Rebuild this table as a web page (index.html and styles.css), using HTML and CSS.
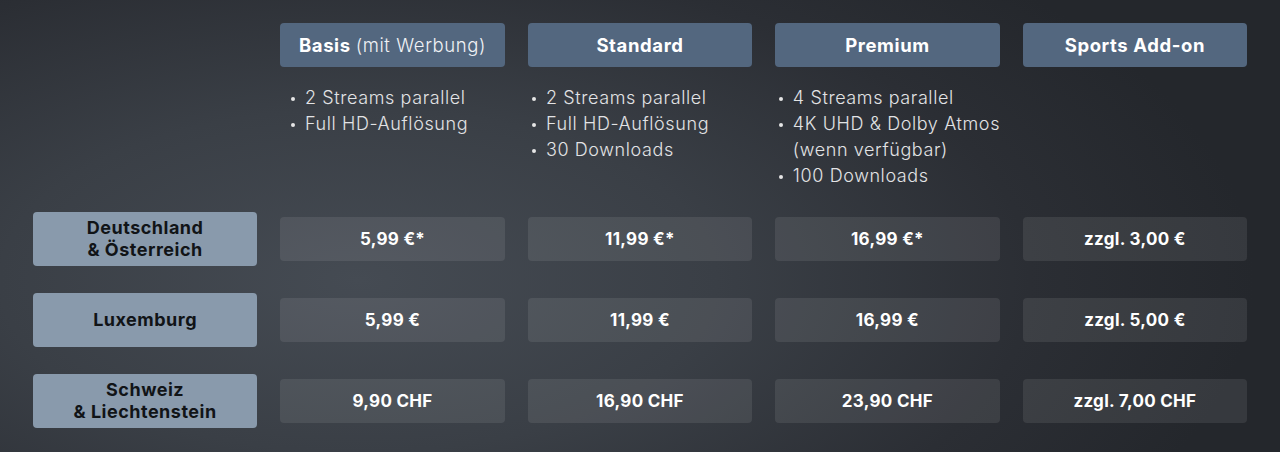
FILE: index.html
```html
<!DOCTYPE html>
<html lang="de">
<head>
<meta charset="utf-8">
<title>Preise</title>
<link rel="stylesheet" href="styles.css">
</head>
<body>
<main class="table">
  <div class="row row-head">
    <div class="corner"></div>
    <div class="plan"><strong>Basis</strong> <span class="light">(mit Werbung)</span></div>
    <div class="plan"><strong>Standard</strong></div>
    <div class="plan"><strong>Premium</strong></div>
    <div class="plan"><strong>Sports Add-on</strong></div>
  </div>
  <div class="row row-features">
    <div></div>
    <ul class="features features-basis">
      <li>2 Streams parallel</li>
      <li>Full HD-Auflösung</li>
    </ul>
    <ul class="features">
      <li>2 Streams parallel</li>
      <li>Full HD-Auflösung</li>
      <li>30 Downloads</li>
    </ul>
    <ul class="features">
      <li>4 Streams parallel</li>
      <li>4K UHD &amp; Dolby Atmos<br>(wenn verfügbar)</li>
      <li>100 Downloads</li>
    </ul>
    <div></div>
  </div>
  <div class="row row-price">
    <div class="country">Deutschland<br>&amp; Österreich</div>
    <div class="price">5,99 €*</div>
    <div class="price">11,99 €*</div>
    <div class="price">16,99 €*</div>
    <div class="price">zzgl. 3,00 €</div>
  </div>
  <div class="row row-price">
    <div class="country">Luxemburg</div>
    <div class="price">5,99 €</div>
    <div class="price">11,99 €</div>
    <div class="price">16,99 €</div>
    <div class="price">zzgl. 5,00 €</div>
  </div>
  <div class="row row-price">
    <div class="country">Schweiz<br>&amp; Liechtenstein</div>
    <div class="price">9,90 CHF</div>
    <div class="price">16,90 CHF</div>
    <div class="price">23,90 CHF</div>
    <div class="price">zzgl. 7,00 CHF</div>
  </div>
</main>
</body>
</html>
```

FILE: styles.css
```css
html, body {
  margin: 0;
  height: 100%;
}

body {
  width: 1280px;
  height: 452px;
  overflow: hidden;
  font-family: Inter, Lato, "Liberation Sans", sans-serif;
  color: #ffffff;
  background:
    radial-gradient(ellipse 70% 95% at 28% 62%, #454b53 0%, #3a3f46 40%, #2b2e34 75%, #24272c 100%);
}

.table {
  display: flex;
  flex-direction: column;
  padding: 23px 33px 0;
}

.row {
  display: grid;
  grid-template-columns: repeat(5, 1fr);
  column-gap: 23.25px;
}

.row-head {
  height: 44px;
}

.plan {
  background: #53677f;
  border-radius: 4px;
  display: flex;
  align-items: center;
  justify-content: center;
  font-size: 18.5px;
  letter-spacing: 0.6px;
  white-space: nowrap;
}

.plan strong {
  font-weight: 700;
}

.plan .light {
  font-weight: 300;
  margin-left: 5px;
  color: #f0f2f5;
}

.row-features {
  height: 145px;
}

.features {
  list-style: none;
  margin: 0;
  padding: 18px 0 0 5px;
  font-size: 18px;
  font-weight: 300;
  line-height: 26px;
  letter-spacing: 0.6px;
  color: #e2e3e5;
  white-space: nowrap;
}

.features-basis {
  padding-left: 11px;
}

.features li {
  position: relative;
  padding-left: 14px;
}

.features li::before {
  content: "";
  position: absolute;
  left: 0;
  top: 12px;
  width: 4px;
  height: 4px;
  border-radius: 50%;
  background: #e6e6e6;
}

.row-price {
  height: 54px;
  align-items: center;
}

.row-price + .row-price {
  margin-top: 27px;
}

.country {
  height: 54px;
  background: #899aac;
  border-radius: 4px;
  color: #111417;
  font-weight: 700;
  font-size: 18px;
  line-height: 22px;
  letter-spacing: 0.5px;
  display: flex;
  align-items: center;
  justify-content: center;
  text-align: center;
}

.price {
  height: 44px;
  background: rgba(255, 255, 255, 0.085);
  border-radius: 4px;
  display: flex;
  align-items: center;
  justify-content: center;
  font-weight: 700;
  font-size: 17px;
  letter-spacing: 0.3px;
}
```
